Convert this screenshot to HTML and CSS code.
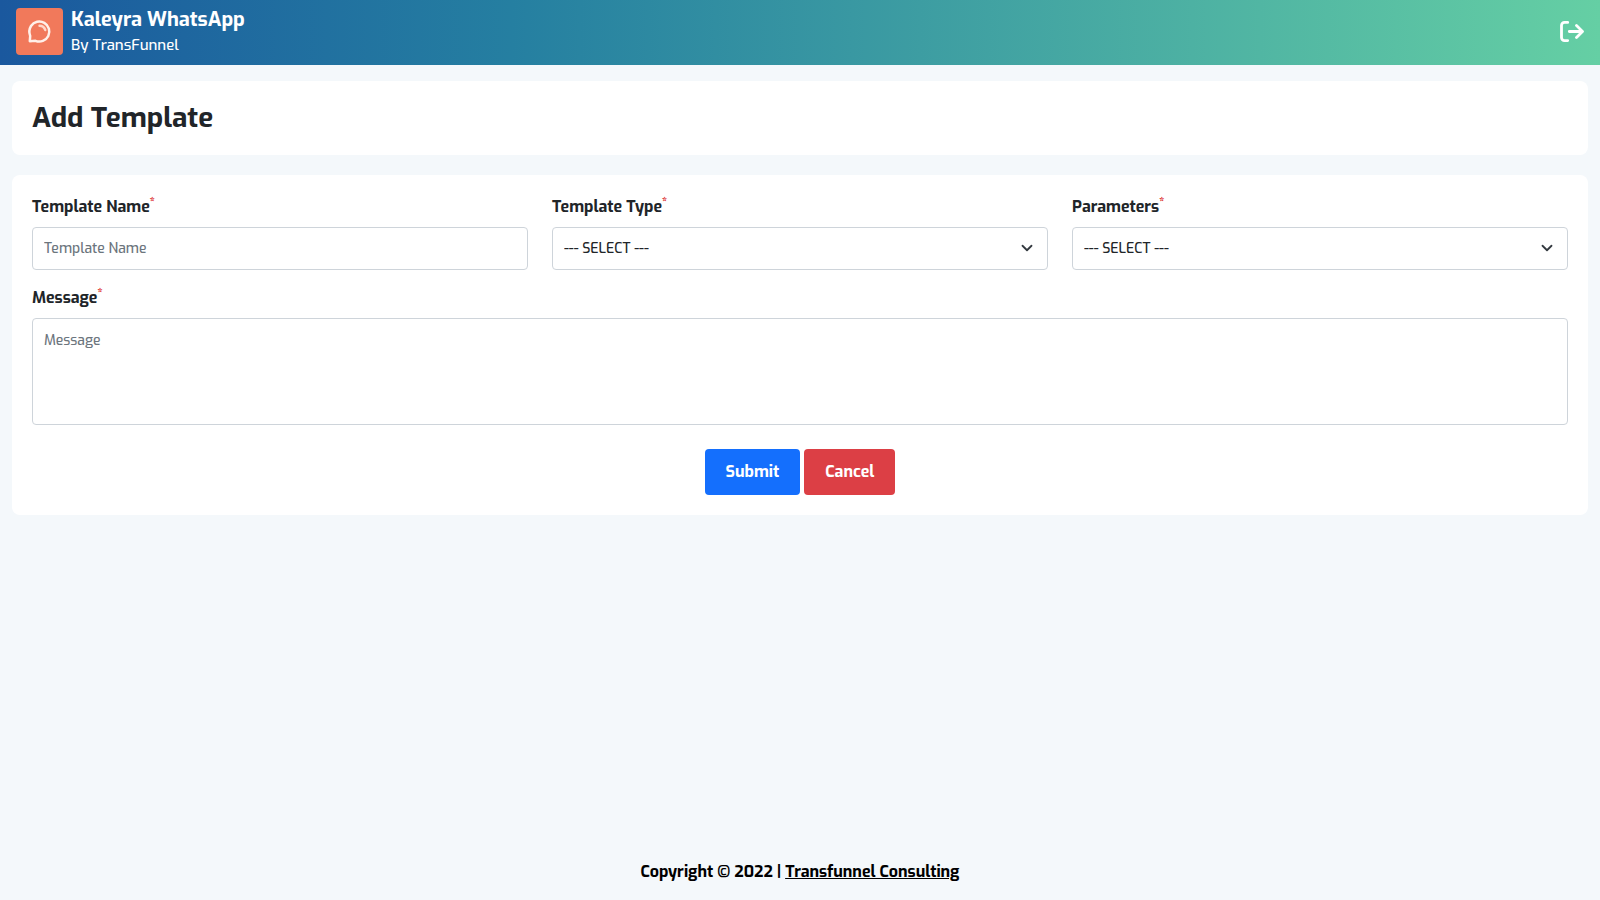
FILE: index.html
```html
<!DOCTYPE html>
<html lang="en">
<head>
<meta charset="utf-8">
<meta name="viewport" content="width=device-width, initial-scale=1">
<title>Add Template</title>
<link rel="stylesheet" href="styles.css">
</head>
<body class="page">
<header class="topbar">
  <div class="brand">
    <svg class="brand-logo" viewBox="0 0 47 47" aria-hidden="true">
      <rect width="47" height="47" rx="4" fill="#f1795b"/>
      <path d="M13.800 33.200L14.200 28C13 25 13.200 21 15 18A10 10 0 1 1 19.500 32.800Z" fill="none" stroke="#fff0e9" stroke-width="2.500" stroke-linejoin="round"/>
      <path d="M23.500 17.800C26.500 17.800 28.500 19.800 29.300 22" fill="none" stroke="#ffd8cb" stroke-width="2.400" stroke-linecap="round"/>
    </svg>
    <div class="brand-text">
      <div class="brand-name">Kaleyra WhatsApp</div>
      <div class="brand-by">By TransFunnel</div>
    </div>
  </div>
  <button class="logout" type="button" aria-label="Log out">
    <svg class="logout-icon" viewBox="0 0 24 22" fill="none" stroke="#fff" stroke-width="2.800" stroke-linecap="round" stroke-linejoin="round" aria-hidden="true">
      <path d="M7.700 1.400H4.500A3 3 0 0 0 1.500 4.400V16.600A3 3 0 0 0 4.500 19.600H7.700"/>
      <path d="M9.300 10.500H22.300M16.500 4.500L22.500 10.500L16.500 16.500"/>
    </svg>
  </button>
</header>
<main class="content">
  <section class="card"><h1 class="title">Add Template</h1></section>
  <form class="card form">
    <div class="field">
      <label class="label" for="name">Template Name<sup class="required">*</sup></label>
      <input class="control" id="name" type="text" placeholder="Template Name">
    </div>
    <div class="field">
      <label class="label" for="type">Template Type<sup class="required">*</sup></label>
      <div class="select-wrap">
        <select class="control select" id="type"><option>--- SELECT ---</option></select>
        <svg class="chevron" viewBox="0 0 16 16" aria-hidden="true"><path d="M2 5l6 6 6-6"/></svg>
      </div>
    </div>
    <div class="field">
      <label class="label" for="params">Parameters<sup class="required">*</sup></label>
      <div class="select-wrap">
        <select class="control select" id="params"><option>--- SELECT ---</option></select>
        <svg class="chevron" viewBox="0 0 16 16" aria-hidden="true"><path d="M2 5l6 6 6-6"/></svg>
      </div>
    </div>
    <div class="field field-wide">
      <label class="label" for="message">Message<sup class="required">*</sup></label>
      <textarea class="control message" id="message" rows="4" placeholder="Message"></textarea>
    </div>
    <div class="actions">
      <button class="btn btn-submit" type="submit">Submit</button>
      <button class="btn btn-cancel" type="button">Cancel</button>
    </div>
  </form>
</main>
<footer class="footer">Copyright © 2022 | <a class="footer-link" href="#">Transfunnel Consulting</a></footer>
</body>
</html>
```
FILE: styles.css
```css
*, *::before, *::after { box-sizing: border-box; }
.page {
  margin: 0;
  min-height: 100vh;
  display: flex;
  flex-direction: column;
  background: #f4f8fb;
  color: #212529;
  font: 500 16px/24px Exo, "Exo 2", Roboto, "Liberation Sans", sans-serif;
}
.topbar {
  display: flex;
  align-items: center;
  justify-content: space-between;
  padding: 6px 16px 8px;
  background: linear-gradient(90deg, #1a589e, #257fa1 32%, #65cfa4);
  color: #fff;
}
.brand { display: flex; align-items: center; gap: 8px; }
.brand-logo { width: 47px; height: 47px; }
.brand-name { font-size: 20px; line-height: 27px; font-weight: 700; }
.brand-by { font-size: 15px; line-height: 24px; }
.logout { display: flex; padding: 0; border: 0; background: none; cursor: pointer; }
.logout-icon { width: 24px; height: 22px; }
.content { flex: 1; display: flex; flex-direction: column; gap: 20px; padding: 16px 12px; }
.card { padding: 20px; border-radius: 8px; background: #fff; }
.title { margin: 0; font-size: 28px; line-height: 34px; font-weight: 700; }
.form { display: grid; grid-template-columns: repeat(3, minmax(0, 1fr)); gap: 16px 24px; }
.field { display: flex; flex-direction: column; gap: 8px; }
.field-wide, .actions { grid-column: 1 / -1; }
.label { font-weight: 700; }
.required { color: #dc3030; font-size: 12px; line-height: 0; font-weight: 800; }
.control {
  display: block;
  width: 100%;
  height: 43px;
  margin: 0;
  padding: 8px 11px;
  border: 1px solid #ced4da;
  border-radius: 4px;
  background: #fff;
  color: #212529;
  font: inherit;
  font-size: 14px;
}
.control::placeholder { color: #6c757d; opacity: 1; }
.select-wrap { position: relative; }
.select { appearance: none; padding: 8px 36px 8px 11px; }
.chevron {
  position: absolute;
  right: 15px;
  top: 15px;
  width: 12px;
  height: 12px;
  fill: none;
  stroke: #343a40;
  stroke-width: 2.4;
  stroke-linecap: round;
  stroke-linejoin: round;
  pointer-events: none;
}
.message { height: 107px; padding-top: 10px; resize: none; }
.actions { display: flex; justify-content: center; gap: 4px; padding-top: 8px; }
.btn { padding: 11px 21px; border: 0; border-radius: 4px; color: #fff; font: inherit; font-weight: 700; cursor: pointer; }
.btn-submit { background: #146ffd; }
.btn-cancel { background: #dc3f45; }
.footer { padding: 16px; text-align: center; color: #000; font-weight: 700; }
.footer-link { color: inherit; text-decoration: underline; }
```
